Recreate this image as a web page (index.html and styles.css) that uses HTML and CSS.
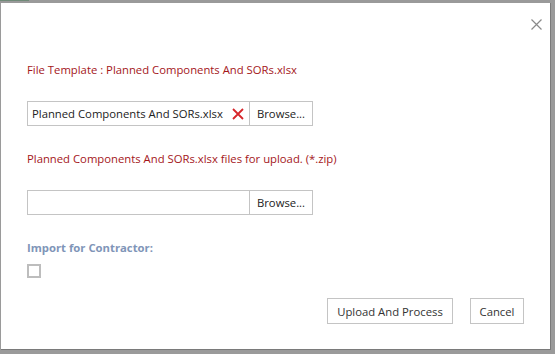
FILE: index.html
```html
<!DOCTYPE html>
<html lang="en">
<head>
    <meta charset="UTF-8">
    <title>Import</title>
    <link rel="stylesheet" href="styles.css">
</head>
<body>
    <div class="backdrop">
        <div class="strip">
            <span class="tab"></span>
        </div>
        <div class="dialog">
            <div class="dialog-header">
                <button class="close" aria-label="Close">
                    <svg width="11" height="11" viewBox="0 0 11 11"><path d="M0.5 0.5L10.5 10.5M10.5 0.5L0.5 10.5" stroke="#8a8a8a" stroke-width="1.2"/></svg>
                </button>
            </div>
            <div class="dialog-body">
                <div class="note">File Template : Planned Components And SORs.xlsx</div>
                <div class="file-row first">
                    <div class="file-name">
                        <span>Planned Components And SORs.xlsx</span>
                        <svg class="remove" width="12" height="12" viewBox="0 0 12 12"><path d="M1 1L11 11M11 1L1 11" stroke="#d6262b" stroke-width="1.8"/></svg>
                    </div>
                    <button class="browse">Browse...</button>
                </div>
                <div class="note second">Planned Components And SORs.xlsx files for upload. (*.zip)</div>
                <div class="file-row">
                    <div class="file-name"></div>
                    <button class="browse">Browse...</button>
                </div>
                <div class="label">Import for Contractor:</div>
                <span class="check"></span>
            </div>
            <div class="dialog-footer">
                <button class="btn upload">Upload And Process</button>
                <button class="btn cancel">Cancel</button>
            </div>
        </div>
    </div>
</body>
</html>
```

FILE: styles.css
```css
/* Page */
body {
    margin: 0;
    background: #9a9a9a;
    font-family: "Open Sans", Arial, sans-serif;
    overflow: hidden;
}

.backdrop {
    width: 555px;
    height: 354px;
}

.strip {
    height: 3px;
    display: flex;
}

.strip .tab {
    width: 29px;
    height: 1px;
    background: #6f8a78;
}

/* Dialog */
.dialog {
    margin-left: 1px;
    width: 549px;
    height: 346px;
    background: #fff;
    border-right: 1px solid #7a7a7a;
    border-bottom: 1px solid #7a7a7a;
    display: flex;
    flex-direction: column;
}

.dialog-header {
    display: flex;
    justify-content: flex-end;
    padding: 15px 7px 0 0;
    height: 22px;
}

.close {
    border: none;
    background: none;
    padding: 0;
    width: 14px;
    height: 14px;
    cursor: pointer;
}

.dialog-body {
    padding: 0 26px;
    flex-grow: 1;
}

.note {
    color: #a4161a;
    font-size: 11.3px;
    margin-top: 22px;
    line-height: 15px;
}

.note.second {
    margin-top: 25px;
}

.file-row {
    display: flex;
    margin-top: 24px;
    height: 25px;
}

.file-name {
    border: 1px solid #c4c4c4;
    border-right: none;
    display: flex;
    align-items: center;
    justify-content: space-between;
    padding: 0 4px;
    font-size: 11.3px;
    color: #222;
    box-sizing: border-box;
    width: 222px;
}

.remove {
    margin-right: 1px;
}

.browse {
    width: 64px;
    height: 25px;
    border: 1px solid #c4c4c4;
    background: #fff;
    font-family: inherit;
    font-size: 11.3px;
    color: #222;
    padding: 0;
}

.label {
    margin-top: 25px;
    color: #8095b8;
    font-size: 11.3px;
    font-weight: bold;
    line-height: 15px;
}

.check {
    display: block;
    margin-top: 9px;
    width: 10px;
    height: 10px;
    border: 2px solid #bdbdbd;
}

.dialog-footer {
    display: flex;
    justify-content: flex-end;
    gap: 17px;
    padding: 0 26px 25px 0;
}

.btn {
    height: 26px;
    padding: 0;
    border: 1px solid #c4c4c4;
    background: #fff;
    font-family: inherit;
    font-size: 11.3px;
    color: #333;
}

.btn.upload {
    width: 126px;
}

.btn.cancel {
    width: 54px;
}
```
